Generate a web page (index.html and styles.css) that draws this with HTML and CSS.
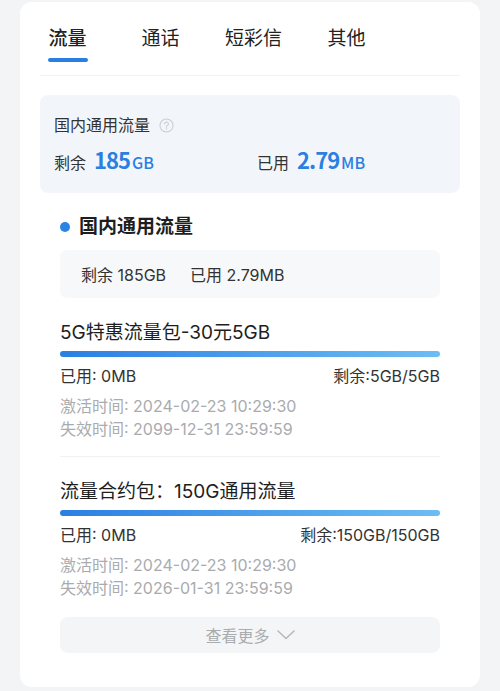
FILE: index.html
```html
<!DOCTYPE html>
<html lang="zh-CN">
<head>
<meta charset="utf-8">
<title>流量</title>
<link rel="stylesheet" href="styles.css">
</head>
<body>
<div class="card">
  <div class="tabs">
    <div class="tab active"><span>流量</span><i class="ink"></i></div>
    <div class="tab"><span>通话</span></div>
    <div class="tab"><span>短彩信</span></div>
    <div class="tab"><span>其他</span></div>
  </div>
  <div class="divider"></div>

  <div class="summary">
    <div class="sum-title">国内通用流量
      <svg class="help" viewBox="0 0 16 16" width="15" height="15"><circle cx="8" cy="8" r="7" fill="none" stroke="#c9cdd2" stroke-width="1.1"/><path d="M6 6.3a2 2 0 1 1 2.8 1.8c-.6.3-.8.6-.8 1.3v.4" fill="none" stroke="#c9cdd2" stroke-width="1.1" stroke-linecap="round"/><circle cx="8" cy="11.6" r=".7" fill="#c9cdd2"/></svg>
    </div>
    <div class="sum-row">
      <div class="sum-item"><span class="lbl">剩余</span><b class="num">185</b><span class="unit">GB</span></div>
      <div class="sum-item"><span class="lbl">已用</span><b class="num">2.79</b><span class="unit">MB</span></div>
    </div>
  </div>

  <div class="section">
    <div class="sec-title"><i class="dot"></i>国内通用流量</div>
    <div class="sec-box"><span>剩余 185GB</span><span>已用 2.79MB</span></div>

    <div class="pkg pkg-first">
      <div class="pkg-title">5G特惠流量包-30元5GB</div>
      <div class="bar"></div>
      <div class="pkg-usage"><span>已用: 0MB</span><span>剩余:5GB/5GB</span></div>
      <div class="pkg-dates">
        <div>激活时间: 2024-02-23 10:29:30</div>
        <div>失效时间: 2099-12-31 23:59:59</div>
      </div>
    </div>
    <div class="sep"></div>
    <div class="pkg">
      <div class="pkg-title">流量合约包：150G通用流量</div>
      <div class="bar"></div>
      <div class="pkg-usage"><span>已用: 0MB</span><span>剩余:150GB/150GB</span></div>
      <div class="pkg-dates">
        <div>激活时间: 2024-02-23 10:29:30</div>
        <div>失效时间: 2026-01-31 23:59:59</div>
      </div>
    </div>

    <div class="more">查看更多
      <svg viewBox="0 0 18 10" width="18" height="10"><path d="M1 1l8 7.5L17 1" fill="none" stroke="#b4b7bb" stroke-width="1.5" stroke-linecap="round" stroke-linejoin="round"/></svg>
    </div>
  </div>
</div>
</body>
</html>
```
FILE: styles.css
```css
* { box-sizing: border-box; }
html, body { margin: 0; padding: 0; }
body {
  background: #f3f4f5;
  font-family: "Inter", "Noto Sans CJK SC", sans-serif;
  color: #222;
  width: 500px;
  height: 691px;
  overflow: hidden;
}
.card {
  margin: 2px 20px 0;
  background: #fff;
  border-radius: 12px;
  padding-bottom: 34px;
}
.tabs {
  display: grid;
  grid-template-columns: repeat(4, 93px);
  padding: 23px 0 0 1px;
  height: 73px;
}
.tab {
  display: flex;
  flex-direction: column;
  align-items: center;
  font-size: 19px;
  line-height: 28px;
  color: #222;
}
.tab.active { font-weight: 500; }
.ink {
  display: block;
  width: 40px;
  height: 4px;
  border-radius: 2px;
  background: #2a7de1;
  margin-top: 5px;
}
.divider {
  height: 1px;
  background: #f1f2f3;
  margin: 0 20px;
}
.summary {
  margin: 19px 20px 0;
  background: #f2f6fb;
  border-radius: 8px;
  padding: 19px 14px 20px;
}
.sum-title {
  display: flex;
  align-items: center;
  gap: 9px;
  font-size: 16px;
  line-height: 22px;
  color: #333;
}
.sum-row {
  display: grid;
  grid-template-columns: 203px 1fr;
  margin-top: 7px;
  height: 30px;
  align-items: center;
}
.sum-item { display: flex; align-items: baseline; }
.lbl { font-size: 16px; color: #333; margin-right: 8px; }
.num {
  font-family: "Noto Sans CJK SC", sans-serif;
  font-size: 22px; font-weight: 700; color: #2b7fe0; letter-spacing: -1px;
}
.unit { font-family: "Noto Sans CJK SC", sans-serif; font-size: 16px; color: #2b7fe0; font-weight: 500; margin-left: 2px; }

.section { padding: 0 40px; }
.sec-title {
  display: flex;
  align-items: center;
  margin-top: 21px;
  font-size: 19px;
  line-height: 26px;
  font-weight: 700;
  color: #1e1e1e;
}
.dot {
  width: 10px; height: 10px; border-radius: 50%;
  background: #2a84e6;
  margin-right: 9px;
}
.sec-box {
  margin-top: 10px;
  height: 48px;
  background: #f7f8fa;
  border-radius: 7px;
  padding-left: 21px;
  display: flex;
  align-items: center;
  gap: 24px;
  font-size: 16px;
  color: #333;
}
.pkg-first { margin-top: 22px; }
.pkg-title {
  font-size: 19px;
  line-height: 26px;
  color: #1e1e1e;
}
.bar {
  margin-top: 5px;
  height: 6px;
  border-radius: 3px;
  background: linear-gradient(90deg, #2b7fe2, #6cbdf4);
}
.pkg-usage {
  margin-top: 8px;
  display: flex;
  justify-content: space-between;
  font-size: 16px;
  line-height: 22px;
  color: #333;
}
.pkg-dates {
  margin-top: 8px;
  font-size: 16px;
  line-height: 23px;
  color: #a9abae;
}
.sep {
  height: 1px;
  background: #f0f1f2;
  margin: 15px 0 22px;
}
.more {
  margin-top: 17px;
  height: 36px;
  border-radius: 8px;
  background: #f4f5f6;
  display: flex;
  align-items: center;
  justify-content: center;
  gap: 7px;
  font-size: 16px;
  color: #a9abae;
}
```
